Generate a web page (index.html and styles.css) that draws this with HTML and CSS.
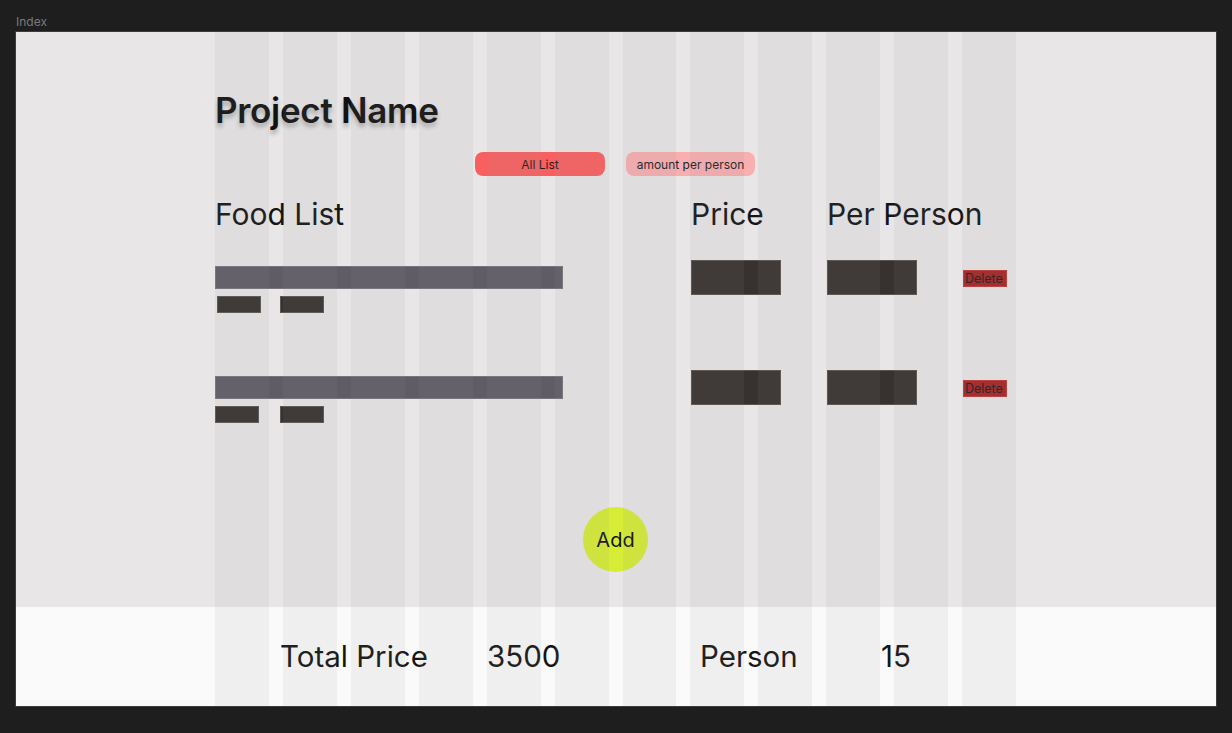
FILE: index.html
```html
<!DOCTYPE html>
<html lang="en">
<head>
<meta charset="utf-8">
<title>Index</title>
<link rel="stylesheet" href="styles.css">
</head>
<body>
<div class="canvas">
  <div class="frame-label">Index</div>
  <div class="frame">
    <main class="board">
      <div class="container">
        <h1 class="title">Project Name</h1>
        <div class="tabs">
          <button class="tab tab--active">All List</button>
          <button class="tab tab--soft">amount per person</button>
        </div>
        <div class="table">
          <div class="row row--head">
            <div class="cell">Food List</div>
            <div class="cell">Price</div>
            <div class="cell">Per Person</div>
          </div>
          <div class="row row--item">
            <div class="food food--first">
              <div class="food__name"></div>
              <div class="food__tags"><span class="tag"></span><span class="tag"></span></div>
            </div>
            <div class="value"></div>
            <div class="value"></div>
            <div><button class="delete">Delete</button></div>
          </div>
          <div class="row row--item">
            <div class="food">
              <div class="food__name"></div>
              <div class="food__tags"><span class="tag"></span><span class="tag"></span></div>
            </div>
            <div class="value"></div>
            <div class="value"></div>
            <div><button class="delete">Delete</button></div>
          </div>
        </div>
        <button class="add">Add</button>
      </div>
    </main>
    <footer class="totals">
      <div class="totals__row">
        <span>Total Price</span>
        <span>3500</span>
        <span>Person</span>
        <span>15</span>
      </div>
    </footer>
    <div class="grid-overlay" aria-hidden="true">
      <span></span><span></span><span></span><span></span><span></span><span></span>
      <span></span><span></span><span></span><span></span><span></span><span></span>
    </div>
  </div>
</div>
</body>
</html>
```

FILE: styles.css
```css
* { box-sizing: border-box; }

html, body {
  margin: 0;
  padding: 0;
}

body {
  background: #1e1e1e;
  font-family: Inter, "Noto Sans", sans-serif;
  color: #141414;
  width: 1232px;
  height: 733px;
  overflow: hidden;
}

.canvas {
  padding: 14px 0 0 16px;
}

.frame-label {
  font-size: 12px;
  line-height: 16px;
  color: #7a7a7a;
  margin-bottom: 2px;
}

.frame {
  position: relative;
  width: 1200px;
  height: 674px;
  display: flex;
  flex-direction: column;
  outline: 1px solid #3c3c3c;
}

.board {
  height: 575px;
  background: #e8e6e7;
}

.container {
  padding: 57px 0 0 199px;
}

.title {
  margin: 0;
  font-size: 35px;
  line-height: 42px;
  font-weight: 600;
  color: #111;
  letter-spacing: -0.3px;
  text-shadow: 0 4px 4px rgba(0, 0, 0, 0.25);
}

.tabs {
  display: flex;
  gap: 21px;
  margin: 21px 0 0 260px;
}

.tab {
  width: 130px;
  height: 24px;
  border: none;
  border-radius: 8px;
  font-family: inherit;
  font-size: 12px;
  color: #1e1e1e;
  padding: 0;
}

.tab--active { background: #fa5f5f; }
.tab--soft { background: #f9aeb0; width: 129px; }

.table {
  margin-top: 20px;
}

.row {
  display: grid;
  grid-template-columns: 476px 136px 136px 60px;
}

.row--head {
  font-size: 30px;
  line-height: 36px;
  color: #141414;
  white-space: nowrap;
  margin-bottom: 28px;
}

.row--item {
  height: 110px;
  align-items: start;
}

.food {
  padding-top: 6px;
}

.food__name {
  width: 348px;
  height: 23px;
  background: #5f5c66;
  border: 1px solid #77747d;
}

.food__tags {
  display: flex;
  gap: 21px;
  margin-top: 7px;
}

.food--first .food__tags {
  padding-left: 2px;
  gap: 19px;
}

.tag {
  width: 44px;
  height: 17px;
  background: #37322f;
  border: 1px solid #5a5654;
}

.value {
  width: 90px;
  height: 35px;
  background: #37312f;
  border: 1px solid #59534f;
}

.delete {
  display: block;
  margin-top: 10px;
  width: 44px;
  height: 17px;
  padding: 0 0 0 1px;
  border: 1px solid #c23a3a;
  background: #a82424;
  font-family: inherit;
  font-size: 12.5px;
  line-height: 15px;
  color: #1e1e1e;
  text-align: left;
}

.add {
  display: block;
  margin: 27px 0 0 368px;
  width: 65px;
  height: 65px;
  border: none;
  border-radius: 50%;
  background: #d6ec35;
  font-family: inherit;
  font-size: 20px;
  color: #111;
  padding: 0;
}

.totals {
  flex: 1;
  background: #fafafa;
  padding: 31px 0 0 264px;
}

.totals__row {
  display: grid;
  grid-template-columns: 207px 213px 181px auto;
  font-size: 29.5px;
  line-height: 36px;
  color: #141414;
}

.grid-overlay {
  position: absolute;
  top: 0;
  bottom: 0;
  left: 199px;
  width: 801px;
  display: grid;
  grid-template-columns: repeat(12, 1fr);
  gap: 14px;
  pointer-events: none;
}

.grid-overlay span {
  background: rgba(150, 146, 152, 0.1);
}
```
